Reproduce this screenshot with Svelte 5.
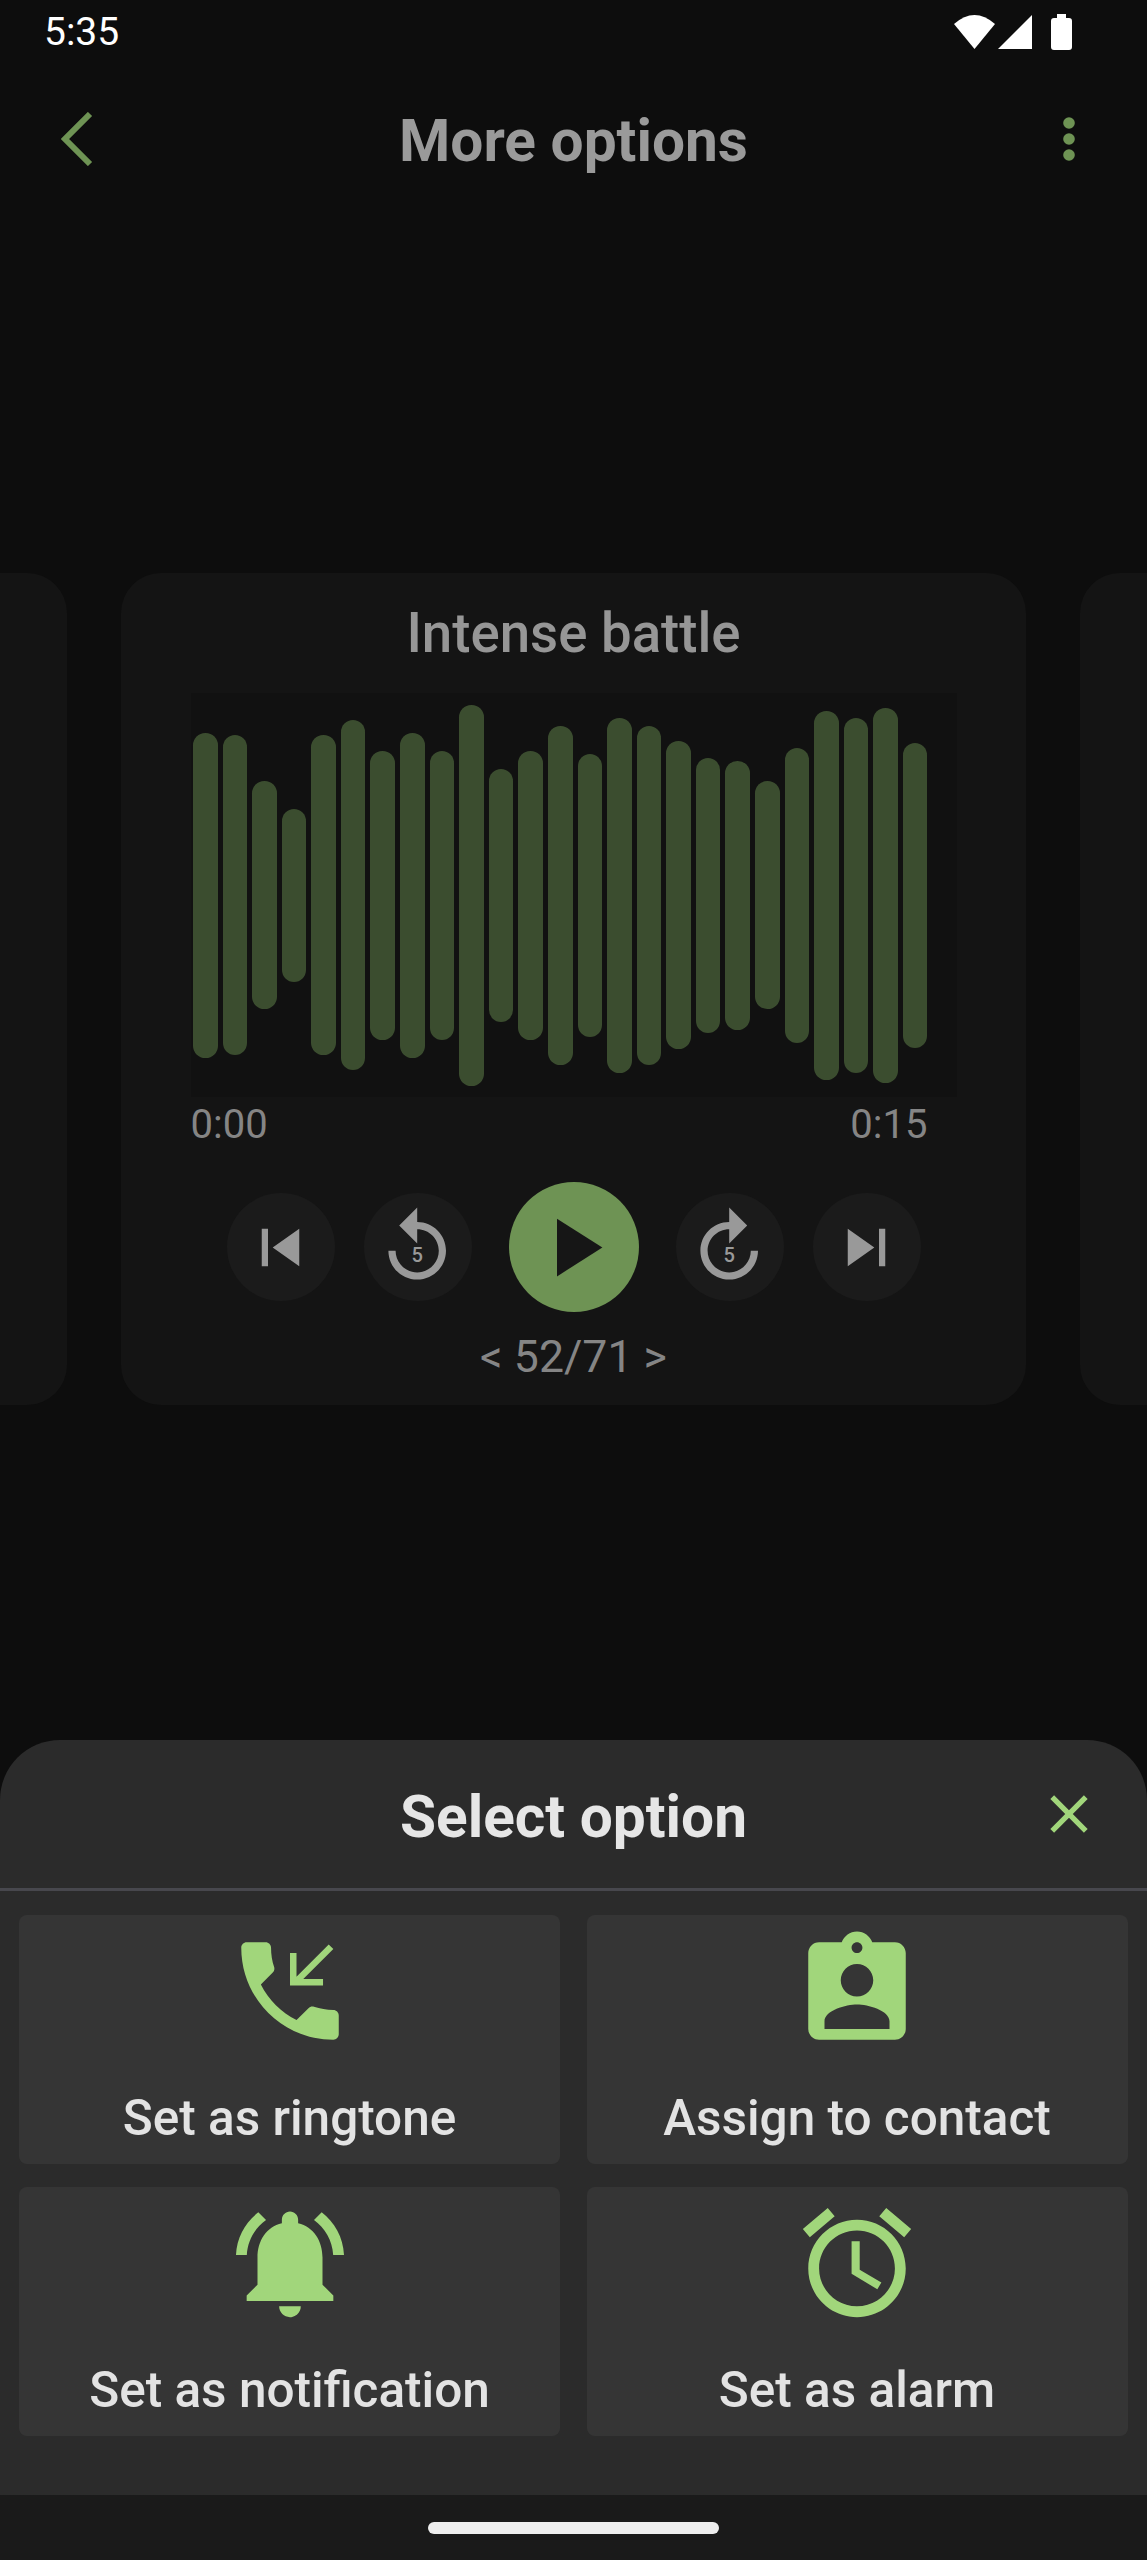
<script>
  const bars = [325, 320, 228, 173, 320, 350, 289, 325, 289, 381, 253, 289, 339, 283, 355, 339, 308, 275, 269, 228, 295, 369, 355, 375, 305];

  const icons = {
    prev: "M6 6h2v12H6zm3.5 6l8.5 6V6z",
    next: "M6 18l8.5-6L6 6v12zM16 6v12h2V6h-2z",
    back5: "M12 5V1L7 6l5 5V7c3.31 0 6 2.69 6 6s-2.69 6-6 6-6-2.69-6-6H4c0 4.42 3.58 8 8 8s8-3.58 8-8-3.58-8-8-8z",
    fwd5: "M12 5V1l5 5-5 5V7c-3.31 0-6 2.69-6 6s2.69 6 6 6 6-2.69 6-6h2c0 4.42-3.58 8-8 8s-8-3.58-8-8 3.58-8 8-8z"
  };

  const options = [
    {
      label: "Set as ringtone",
      path: "M20 15.5c-1.25 0-2.45-.2-3.57-.57-.35-.11-.74-.03-1.02.24l-2.2 2.2c-2.83-1.44-5.15-3.75-6.59-6.59l2.2-2.21c.28-.26.36-.65.25-1C8.7 6.45 8.5 5.25 8.5 4c0-.55-.45-1-1-1H4c-.55 0-1 .45-1 1 0 9.39 7.61 17 17 17 .55 0 1-.45 1-1v-3.5c0-.55-.45-1-1-1zM12 5h1.2v4.35L19.15 3.4l.85.85L14.45 9.8h3.65V11H12z"
    },
    {
      label: "Assign to contact",
      path: "M19 3h-4.18C14.4 1.84 13.3 1 12 1c-1.3 0-2.4.84-2.82 2H5c-1.1 0-2 .9-2 2v14c0 1.1.9 2 2 2h14c1.1 0 2-.9 2-2V5c0-1.1-.9-2-2-2zm-7 0c.55 0 1 .45 1 1s-.45 1-1 1-1-.45-1-1 .45-1 1-1zm0 4c1.66 0 3 1.34 3 3s-1.34 3-3 3-3-1.34-3-3 1.34-3 3-3zm6 12H6v-1.4c0-2 4-3.1 6-3.1s6 1.1 6 3.1V19z"
    },
    {
      label: "Set as notification",
      path: "M7.58 4.08L6.15 2.65C3.75 4.48 2.17 7.3 2.03 10.5h2c.15-2.65 1.51-4.97 3.55-6.42zm12.39 6.42h2c-.15-3.2-1.73-6.02-4.12-7.85l-1.42 1.43c2.02 1.45 3.39 3.77 3.54 6.42zM18 11c0-3.07-1.64-5.64-4.5-6.32V4c0-.83-.67-1.5-1.5-1.5s-1.5.67-1.5 1.5v.68C7.63 5.36 6 7.92 6 11v5l-2 2v1h16v-1l-2-2v-5zm-6 11c.14 0 .27-.01.4-.04.65-.14 1.18-.58 1.44-1.18.1-.24.15-.5.15-.78h-4c.01 1.1.9 2 2.01 2z"
    },
    {
      label: "Set as alarm",
      path: "M22 5.72l-4.6-3.86-1.29 1.53 4.6 3.86L22 5.72zM7.88 3.39L6.6 1.86 2 5.71l1.29 1.53 4.59-3.85zM12.5 8H11v6l4.75 2.85.75-1.23-4-2.37V8zM12 4c-4.97 0-9 4.03-9 9s4.03 9 9 9c4.97 0 9-4.03 9-9s-4.03-9-9-9zm0 16c-3.87 0-7-3.13-7-7s3.13-7 7-7 7 3.13 7 7-3.13 7-7 7z"
    }
  ];
</script>

<div class="page">
  <header class="status">
    <span class="clock">5:35</span>
    <div class="status-icons">
      <svg class="wifi" viewBox="0 0 41 34"><path d="M0 9Q20.5-9 41 9L20.5 34z" /></svg>
      <svg class="signal" viewBox="0 0 34 34"><path d="M34 0v34H0z" /></svg>
      <svg class="battery" viewBox="0 0 21 36"><path d="M6 0h9v4h3a3 3 0 0 1 3 3v26a3 3 0 0 1-3 3H3a3 3 0 0 1-3-3V7a3 3 0 0 1 3-3h3z" /></svg>
    </div>
  </header>

  <div class="topbar">
    <svg class="chevron" viewBox="0 0 32 54"><path d="M29 2L4 27l25 25" /></svg>
    <h1>More options</h1>
    <svg class="dots" viewBox="0 0 12 44">
      <circle cx="6" cy="6" r="5.8" />
      <circle cx="6" cy="22" r="5.8" />
      <circle cx="6" cy="38" r="5.8" />
    </svg>
  </div>

  <main class="carousel">
    <div class="card side"></div>
    <section class="card">
      <h2>Intense battle</h2>
      <div class="wave">
        {#each bars as h}
          <span class="bar" style="height: {h}px"></span>
        {/each}
      </div>
      <div class="times">
        <span>0:00</span>
        <span>0:15</span>
      </div>
      <div class="controls">
        <button class="ctl"><svg class="ctl-icon" viewBox="0 0 24 24"><path d={icons.prev} /></svg></button>
        <button class="ctl seek">
          <svg class="seek-icon" viewBox="0 0 24 24"><path d={icons.back5} /><text x="12" y="16" text-anchor="middle">5</text></svg>
        </button>
        <button class="play"><svg class="play-icon" viewBox="0 0 24 24"><path d="M8 5v14l11-7z" /></svg></button>
        <button class="ctl seek">
          <svg class="seek-icon" viewBox="0 0 24 24"><path d={icons.fwd5} /><text x="12" y="16" text-anchor="middle">5</text></svg>
        </button>
        <button class="ctl"><svg class="ctl-icon" viewBox="0 0 24 24"><path d={icons.next} /></svg></button>
      </div>
      <div class="counter">&lt; 52/71 &gt;</div>
    </section>
    <div class="card side"></div>
  </main>

  <section class="sheet">
    <div class="sheet-head">
      <h3>Select option</h3>
      <svg class="close" viewBox="0 0 24 24"><path d="M19 6.41L17.59 5 12 10.59 6.41 5 5 6.41 10.59 12 5 17.59 6.41 19 12 13.41 17.59 19 19 17.59 13.41 12z" /></svg>
    </div>
    <div class="grid">
      {#each options as opt}
        <button class="tile">
          <svg class="tile-icon" viewBox="0 0 24 24"><path d={opt.path} /></svg>
          <span class="tile-label">{opt.label}</span>
        </button>
      {/each}
    </div>
  </section>

  <footer class="navbar"><span class="pill"></span></footer>
</div>

<style>
  :global(body) {
    margin: 0;
    background: #0d0d0d;
  }

  .page {
    height: 2560px;
    display: flex;
    flex-direction: column;
    overflow: hidden;
    background: #0d0d0d;
    font-family: Roboto, "Liberation Sans", sans-serif;
  }

  .status {
    height: 64px;
    flex: none;
    display: flex;
    align-items: center;
    justify-content: space-between;
    padding: 0 75px 0 44px;
    color: #fff;
    font-size: 39px;
  }

  .status-icons {
    display: flex;
    align-items: center;
    fill: #fff;
  }

  .wifi { width: 41px; height: 34px; }
  .signal { width: 34px; height: 34px; margin-left: 3px; }
  .battery { width: 21px; height: 36px; margin-left: 19px; }

  .topbar {
    height: 150px;
    flex: none;
    display: grid;
    grid-template-columns: 1fr auto 1fr;
    align-items: center;
    padding: 0 72px 0 61px;
  }

  .chevron {
    width: 32px;
    height: 54px;
    fill: none;
    stroke: #6e9354;
    stroke-width: 6;
  }

  .dots {
    width: 12px;
    height: 44px;
    justify-self: end;
    fill: #6e9354;
  }

  h1 {
    margin: 4px 0 0 11px;
    font-size: 58.6px;
    font-weight: 700;
    color: #9a9a9a;
  }

  .carousel {
    flex: 1;
    display: flex;
    justify-content: center;
    align-items: flex-start;
    gap: 54px;
    padding-top: 359px;
    overflow: hidden;
  }

  .card {
    width: 905px;
    flex: none;
    box-sizing: border-box;
    padding: 30px 69.5px 24px;
    border-radius: 40px;
    background: #141414;
  }

  .side {
    height: 832px;
  }

  h2 {
    margin: 0;
    font-size: 54.6px;
    line-height: 60px;
    font-weight: 500;
    text-align: center;
    color: #969696;
  }

  .wave {
    height: 404px;
    margin-top: 30px;
    padding-left: 2.5px;
    display: flex;
    align-items: center;
    gap: 5px;
    background: #111;
  }

  .bar {
    width: 24.58px;
    flex: none;
    border-radius: 12.3px;
    background: #3b4d2f;
  }

  .times {
    margin-top: 6px;
    padding: 0 29px 0 0;
    display: flex;
    justify-content: space-between;
    font-size: 40px;
    line-height: 44px;
    color: #858585;
  }

  .controls {
    margin-top: 35px;
    display: flex;
    align-items: center;
    justify-content: center;
  }

  button {
    padding: 0;
    border: 0;
    font: inherit;
  }

  .ctl {
    width: 108px;
    height: 108px;
    display: flex;
    align-items: center;
    justify-content: center;
    border-radius: 50%;
    background: #1b1b1b;
    fill: #999;
  }

  .seek { margin: 0 37px 0 29px; }
  .seek:nth-child(4) { margin: 0 29px 0 37px; }

  .ctl-icon { width: 75px; height: 75px; }
  .seek-icon { width: 86.4px; height: 86.4px; flex: none; }

  .seek-icon text {
    font-size: 5.6px;
    font-weight: 500;
    fill: #999;
  }

  .play {
    width: 130px;
    height: 130px;
    display: flex;
    align-items: center;
    justify-content: center;
    border-radius: 50%;
    background: #6e9354;
    fill: #161616;
  }

  .play-icon { width: 99px; height: 99px; }

  .counter {
    margin-top: 21px;
    text-align: center;
    font-size: 44.6px;
    line-height: 48px;
    color: #858585;
  }

  .sheet {
    height: 755px;
    flex: none;
    box-sizing: border-box;
    border-radius: 60px 60px 0 0;
    background: #2b2b2b;
  }

  .sheet-head {
    height: 148px;
    display: grid;
    grid-template-columns: 1fr auto 1fr;
    align-items: center;
    padding: 0 46px;
    border-bottom: 3px solid #47474d;
  }

  h3 {
    grid-column: 2;
    margin: 6px 0 0;
    font-size: 58.6px;
    font-weight: 700;
    color: #e6e6e6;
  }

  .close {
    width: 64px;
    height: 64px;
    justify-self: end;
    fill: #a1d67b;
  }

  .grid {
    display: grid;
    grid-template-columns: 541px 541px;
    grid-auto-rows: 249px;
    gap: 23px 26.5px;
    padding: 24px 19.5px 0 19px;
  }

  .tile {
    display: flex;
    flex-direction: column;
    align-items: center;
    padding-top: 11px;
    border-radius: 8px;
    background: #353535;
  }

  .tile-icon {
    width: 130px;
    height: 130px;
    flex: none;
    fill: #a1d67b;
  }

  .tile-label {
    margin-top: 33px;
    font-size: 49.5px;
    font-weight: 500;
    line-height: 58px;
    color: #e3e3e3;
  }

  .navbar {
    height: 65px;
    flex: none;
    box-sizing: border-box;
    padding-top: 27px;
    display: flex;
    justify-content: center;
    background: #1a1a1a;
  }

  .pill {
    width: 291px;
    height: 12px;
    border-radius: 6px;
    background: #eee;
  }
</style>
